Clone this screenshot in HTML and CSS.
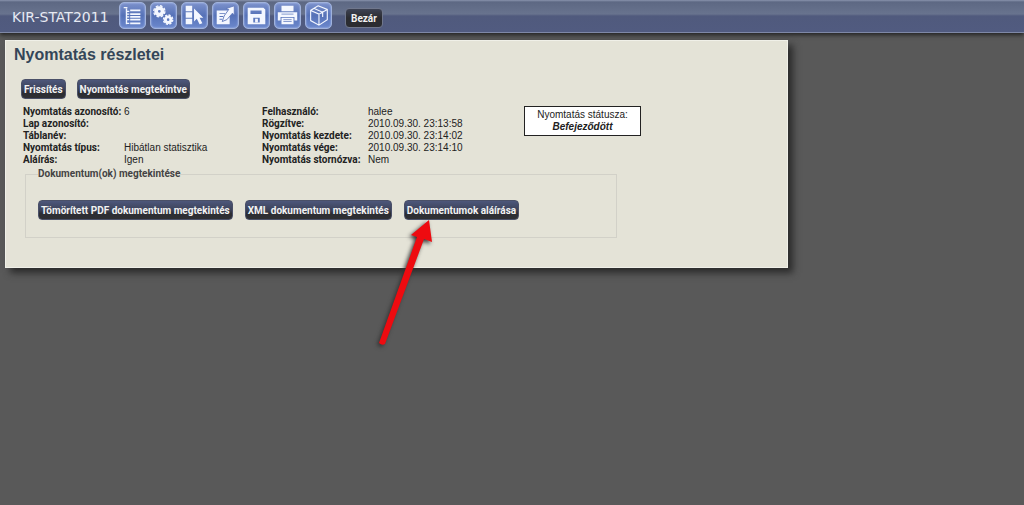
FILE: index.html
```html
<!DOCTYPE html>
<html lang="hu">
<head>
<meta charset="utf-8">
<title>KIR-STAT2011</title>
<link rel="stylesheet" href="styles.css">
</head>
<body>
<header class="topbar">
  <span class="brand">KIR-STAT2011</span>
  <nav class="tools">
    <button class="tool" type="button" aria-label="Lista"><svg viewBox="0 0 27 27"><path d="M4 5h4M7 6v17M7 9h3M7 12h3M7 15h3M7 18h3M7 22h3" stroke-width="1.5"/><path d="M11 8h11M11 12h11M11 15h11M11 18h11M11 22h11" stroke-width="1.8"/></svg></button>
    <button class="tool" type="button" aria-label="Beállítások"><svg viewBox="0 0 27 27"><circle cx="9" cy="9" r="3.5" stroke-width="4"/><circle cx="9" cy="9" r="6" stroke-width="1.5" stroke-dasharray="2.9 1.8"/><circle cx="18.5" cy="18" r="3" stroke-width="3.2"/><circle cx="18.5" cy="18" r="5" stroke-width="1.5" stroke-dasharray="2.4 1.5"/></svg></button>
    <button class="tool" type="button" aria-label="Kijelölés"><svg viewBox="0 0 27 27"><path class="solid" d="M4 3h7v6H4zM4 10h7v6H4zM4 17h7v6H4zM13 6v14l3-3 3 6 3-1-3-6h4z"/></svg></button>
    <button class="tool" type="button" aria-label="Szerkesztés"><svg viewBox="0 0 27 27"><path class="solid" fill-rule="evenodd" d="M4 8h14v15H4zM7 11v1h6v-1zM7 14v1h4v-1zM7 17v1h3v-1z"/><path class="pen" d="M10 20l2-6 5-7-3-1 9-3v10l-2-2-6 7z"/></svg></button>
    <button class="tool" type="button" aria-label="Mentés"><svg viewBox="0 0 27 27"><path class="solid" fill-rule="evenodd" d="M4 5h17l2 2v16H4zM7 8v4h12V8zM10 16v5h7v-5z"/><path class="solid" d="M12 17h3v4h-3z"/></svg></button>
    <button class="tool" type="button" aria-label="Nyomtatás"><svg viewBox="0 0 27 27"><path class="solid" fill-rule="evenodd" d="M7 3h13v6H7zM3 10h21v9h-3v-4H6v4H3zM7 16h13v7H7z"/><path class="cut" d="M9 18h9M9 20h9M7 12h13"/></svg></button>
    <button class="tool" type="button" aria-label="Csomag"><svg viewBox="0 0 27 27"><path d="M13 3l10 4v11l-9 6-9-5V8zM5 8l9 4 9-5M14 12v12M9 6l9 4v5" stroke-width="1.2"/></svg></button>
  </nav>
  <button class="btn close" type="button">Bezár</button>
</header>
<main class="panel">
  <h1 class="title">Nyomtatás részletei</h1>
  <div class="actions">
    <button class="btn" type="button">Frissítés</button>
    <button class="btn" type="button">Nyomtatás megtekintve</button>
  </div>
  <div class="details">
    <dl class="facts">
      <dt>Nyomtatás azonosító:</dt><dd>6</dd>
      <dt>Lap azonosító:</dt><dd></dd>
      <dt>Táblanév:</dt><dd></dd>
      <dt>Nyomtatás típus:</dt><dd>Hibátlan statisztika</dd>
      <dt>Aláírás:</dt><dd>Igen</dd>
    </dl>
    <dl class="facts">
      <dt>Felhasználó:</dt><dd>halee</dd>
      <dt>Rögzítve:</dt><dd>2010.09.30. 23:13:58</dd>
      <dt>Nyomtatás kezdete:</dt><dd>2010.09.30. 23:14:02</dd>
      <dt>Nyomtatás vége:</dt><dd>2010.09.30. 23:14:10</dd>
      <dt>Nyomtatás stornózva:</dt><dd>Nem</dd>
    </dl>
    <p class="status">Nyomtatás státusza:<strong class="state">Befejeződött</strong></p>
  </div>
  <fieldset class="documents">
    <legend class="legend">Dokumentum(ok) megtekintése</legend>
    <div class="doc-actions">
      <button class="btn" type="button">Tömörített PDF dokumentum megtekintés</button>
      <button class="btn" type="button">XML dokumentum megtekintés</button>
      <button class="btn" type="button">Dokumentumok aláírása</button>
    </div>
  </fieldset>
</main>
<svg class="pointer" viewBox="0 0 70 140" aria-hidden="true"><path d="M59 9l3 22-8-3-39 105q-3 2-6-1L47 26l-6-2z"/></svg>
</body>
</html>
```
FILE: styles.css
```css
body {
  margin: 0;
  min-height: 100vh;
  background: #595959;
  color: #222;
  font: 10px/12px "Liberation Sans", Arial, sans-serif;
}

.topbar {
  display: flex;
  align-items: flex-start;
  box-sizing: border-box;
  height: 33px;
  padding: 2px 12px 0;
  border-bottom: 1px solid #7f88a6;
  background: linear-gradient(#8993ad 0, #5d6883 2px, #68738e 14px, #505a7d 16px, #515b80 100%);
  box-shadow: 0 2px 4px #222;
}

.brand {
  width: 107px;
  color: #e6e9f2;
  font: 14px/30px "DejaVu Sans", Verdana, sans-serif;
}

.tools {
  display: flex;
  gap: 4px;
}

.tool {
  box-sizing: border-box;
  width: 27px;
  height: 27px;
  padding: 0;
  border: 1px solid #a0b2dc;
  border-radius: 5px;
  background: linear-gradient(#7c91cb, #5672b8 50%, #6c88cc);
  box-shadow: inset 0 0 2px #b5c7f2;
}

.tool svg {
  display: block;
  width: 25px;
  height: 25px;
  fill: none;
  stroke: #f4f7ff;
}

.tool .solid {
  fill: #f4f7ff;
  stroke: none;
}

.tool .pen {
  fill: #f4f7ff;
  stroke: #6079bb;
}

.tool .cut {
  stroke: #7b91c9;
}

.btn {
  height: 20px;
  padding: 1px 2px 0;
  border: 1px solid #4a5068;
  border-radius: 4px;
  background: linear-gradient(#4d577b, #3c4259 50%, #2c2d33 70%, #2f3034);
  color: #f2f2f2;
  font: bold 10px/16px Roboto, Arial, sans-serif;
  white-space: nowrap;
}

.close {
  margin: 6px 0 0 13px;
  padding: 1px 5px 0;
  border-color: #70778c;
  background: linear-gradient(#3d4254, #2b2c31 50%);
}

.panel {
  box-sizing: border-box;
  max-width: 783px;
  margin: 7px 5px 0;
  padding: 4px 8px 29px;
  border: 1px solid #f0f0e8;
  background: #e4e3d7;
  box-shadow: 5px 5px 7px #2b2b2b;
}

.title {
  margin: 0;
  color: #344658;
  font-size: 16px;
  line-height: 20px;
}

.actions {
  display: flex;
  gap: 11px;
  margin: 14px 7px 7px;
}

.details {
  display: flex;
  align-items: flex-start;
  margin-left: 9px;
}

.facts {
  display: grid;
  grid-template-columns: 101px 138px;
  grid-auto-rows: 12px;
  margin: 0;
  white-space: nowrap;
}

.facts + .facts {
  grid-template-columns: 106px 156px;
}

.facts dt {
  font-family: Roboto, Arial, sans-serif;
  font-weight: bold;
}

.facts dd {
  margin: 0;
}

.status {
  box-sizing: border-box;
  width: 117px;
  margin: 0;
  padding: 2px;
  border: 1px solid #222;
  background: #fff;
  text-align: center;
}

.state {
  display: block;
  font-style: italic;
}

.documents {
  max-width: 566px;
  margin: 2px 11px 0;
  padding: 20px 12px 17px;
  border: 1px solid #d2d1c8;
}

.legend {
  padding: 0;
  color: #444;
  font-family: Roboto, Arial, sans-serif;
  font-weight: bold;
}

.doc-actions {
  display: flex;
  flex-wrap: wrap;
  gap: 12px;
}

.pointer {
  position: absolute;
  top: 211px;
  left: 370px;
  width: 70px;
  height: 140px;
  fill: #ee0b10;
  filter: drop-shadow(-2px 2px 2px #333);
  pointer-events: none;
}
```
